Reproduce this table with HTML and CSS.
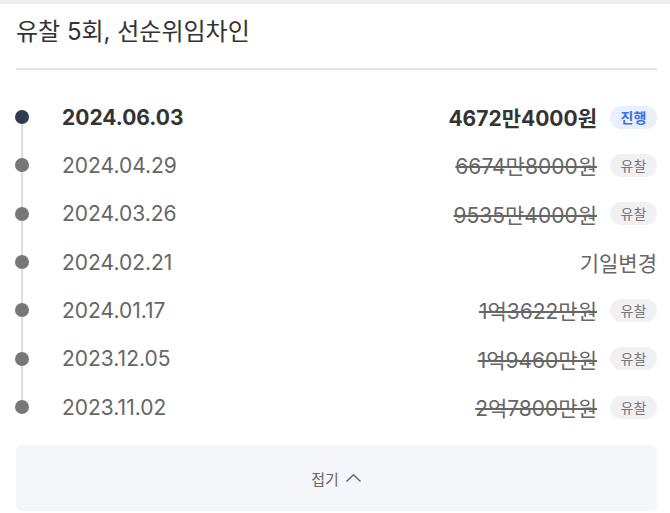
FILE: index.html
```html
<!DOCTYPE html>
<html lang="ko">

<head>
    <meta charset="UTF-8">
    <meta name="viewport" content="width=device-width, initial-scale=1.0">
    <title>매각기일</title>
    <link rel="stylesheet" href="styles.css">
</head>

<body>
    <div class="panel">
        <h2 class="title">유찰 5회, 선순위임차인</h2>

        <ul class="timeline">
            <li class="row current">
                <span class="dot"></span>
                <span class="date">2024.06.03</span>
                <span class="price">4672만4000원</span>
                <span class="badge on">진행</span>
            </li>
            <li class="row">
                <span class="dot"></span>
                <span class="date">2024.04.29</span>
                <span class="price off">6674만8000원</span>
                <span class="badge">유찰</span>
            </li>
            <li class="row">
                <span class="dot"></span>
                <span class="date">2024.03.26</span>
                <span class="price off">9535만4000원</span>
                <span class="badge">유찰</span>
            </li>
            <li class="row">
                <span class="dot"></span>
                <span class="date">2024.02.21</span>
                <span class="price">기일변경</span>
            </li>
            <li class="row">
                <span class="dot"></span>
                <span class="date">2024.01.17</span>
                <span class="price off">1억3622만원</span>
                <span class="badge">유찰</span>
            </li>
            <li class="row">
                <span class="dot"></span>
                <span class="date">2023.12.05</span>
                <span class="price off">1억9460만원</span>
                <span class="badge">유찰</span>
            </li>
            <li class="row">
                <span class="dot"></span>
                <span class="date">2023.11.02</span>
                <span class="price off">2억7800만원</span>
                <span class="badge">유찰</span>
            </li>
        </ul>

        <button type="button" class="fold">
            접기
            <svg width="17" height="10" viewBox="0 0 17 10">
                <polyline points="1.5,8.5 8.5,1.8 15.5,8.5" fill="none" stroke="#666" stroke-width="1.5" />
            </svg>
        </button>
    </div>
</body>

</html>
```

FILE: styles.css
```css
body {
    margin: 0;
    padding: 0;
    background-color: #FFFFFF;
    font-family: Inter, "Noto Sans CJK KR", sans-serif;
    color: #333333;
}

.panel {
    border-top: 4px solid #EEEEEE;
    padding: 0 13px 0 16px;
}

.title {
    margin: 0;
    padding: 11px 0 20px;
    font-size: 24px;
    font-weight: 400;
    line-height: 33px;
    color: #333333;
    border-bottom: 2px solid #E4E4E4;
}

.timeline {
    list-style: none;
    margin: 23px 0 14px;
    padding: 0;
    position: relative;
}

/* vertical line behind the dots */
.timeline::before {
    content: "";
    position: absolute;
    left: 5px;
    top: 24px;
    bottom: 24px;
    width: 2px;
    background-color: #DDDDDD;
}

.row {
    display: flex;
    align-items: center;
    height: 48.33px;
    position: relative;
}

.dot {
    width: 14px;
    height: 14px;
    border-radius: 50%;
    background-color: #777777;
    margin-left: -1px;
}

.date {
    margin-left: 33px;
    font-size: 21px;
    color: #666666;
}

.price {
    margin-left: auto;
    font-size: 21px;
    color: #666666;
}

.price.off {
    text-decoration: line-through;
}

.badge {
    margin-left: 13px;
    width: 47px;
    height: 23px;
    line-height: 23px;
    border-radius: 12px;
    text-align: center;
    font-size: 14px;
    background-color: #F1F1F3;
    color: #777777;
}

.current .dot {
    background-color: #2E3E50;
}

.current .date,
.current .price {
    font-weight: 700;
    color: #333333;
}

.badge.on {
    background-color: #E8EFFD;
    color: #3D6EE8;
    font-weight: 700;
}

.fold {
    display: flex;
    align-items: center;
    justify-content: center;
    gap: 6px;
    width: 100%;
    height: 66px;
    border: none;
    border-radius: 6px;
    background-color: #F5F6F9;
    font-family: inherit;
    font-size: 15px;
    color: #666666;
    cursor: pointer;
}
```
